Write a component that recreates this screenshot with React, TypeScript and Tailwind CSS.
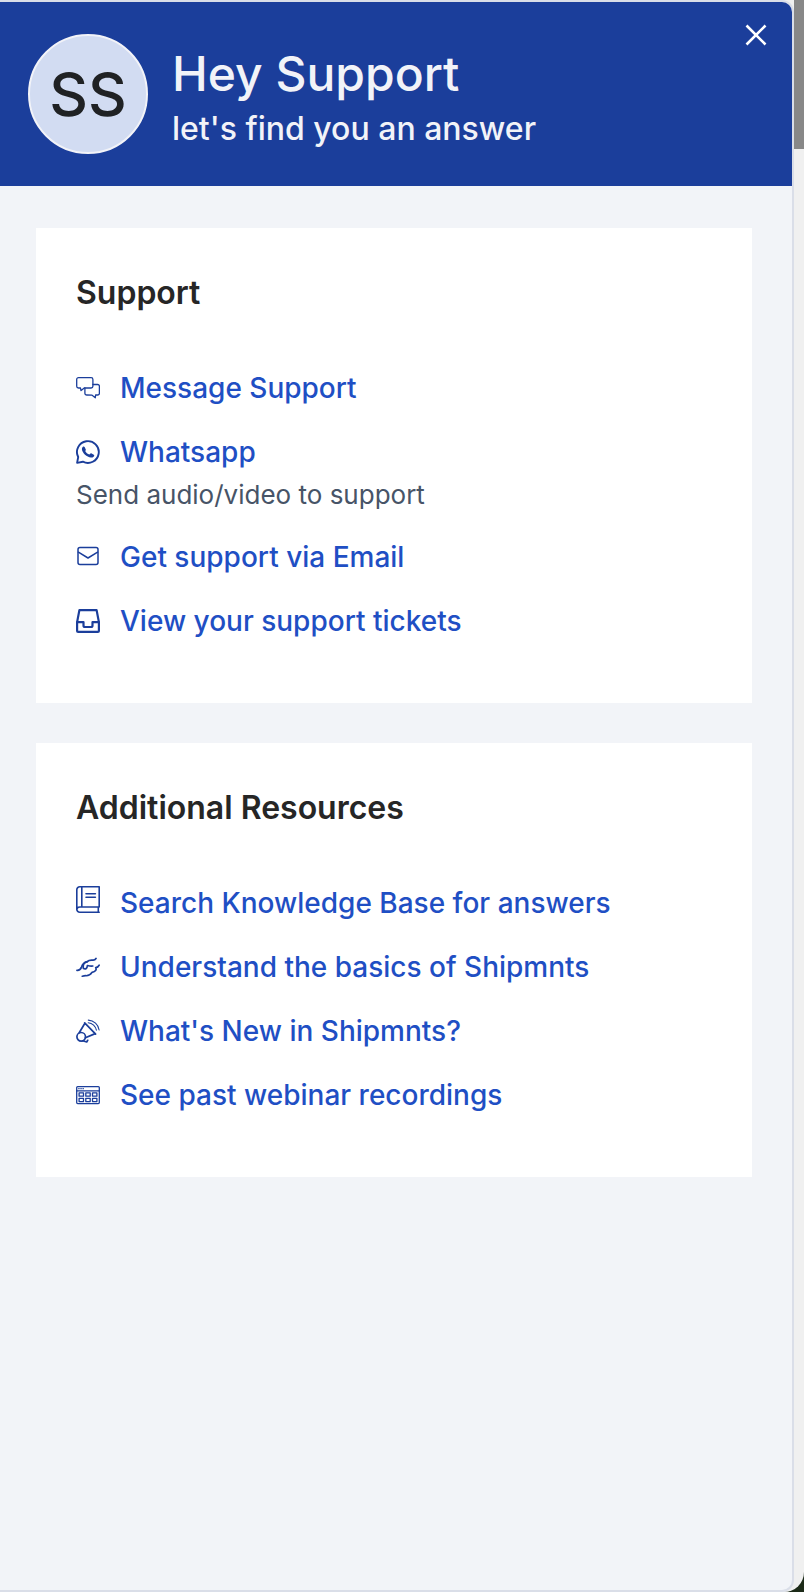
import type { ReactNode } from 'react';

type ResourceLink = {
  label: string;
  icon: ReactNode;
  description?: string;
};

const iconProps = {
  width: 24,
  fill: 'none',
  stroke: 'currentColor',
  strokeLinecap: 'round' as const,
  strokeLinejoin: 'round' as const,
  'aria-hidden': true,
  className: 'shrink-0 text-[#1b3e9b]',
};

function ChatIcon() {
  return (
    <svg {...iconProps} height={24} viewBox="0 0 24 24" strokeWidth="1.3">
      <path d="M2.5 1.6h12.6a1.800 1.800 0 0 1 1.800 1.800v6.800a1.800 1.800 0 0 1-1.800 1.800H8.200l-1.800 1.400-1.400 1.200-.5-2.600h-2A1.800 1.800 0 0 1 .7 10.200V3.400a1.800 1.800 0 0 1 1.800-1.800z" />
      <path d="M16.900 8.500h4.700a1.800 1.800 0 0 1 1.800 1.800v6.900a1.800 1.800 0 0 1-1.800 1.800h-2l-.3 2.800-3.200-2.600-5.400-.2a1.800 1.800 0 0 1-1.800-1.800V12" />
    </svg>
  );
}

function WhatsappIcon() {
  return (
    <svg {...iconProps} height={24} viewBox="0 0 24 24" strokeWidth="1.9">
      <path d="M1.1 22.9l1.100-5.900a10.900 10.900 0 1 1 4.700 4.700z" />
      <path
        d="M6.700 6.900c.5-.6 1.500-.6 1.900.1l1.200 2.400c.2.500 0 1-.6 1.700 1 1.800 2.300 2.900 4.200 3.500l1.100-1c.4-.3.700-.3 1.100-.1l2.200 1.200c.4.200.6.600.4 1.100-.4 1.300-1.600 1.900-3.200 1.700C10.800 17.200 6.300 13 5.900 9.300c-.1-1 .2-1.700.8-2.400z"
        fill="currentColor"
        stroke="none"
      />
    </svg>
  );
}

function MailIcon() {
  return (
    <svg {...iconProps} height={24} viewBox="0 0 24 24" strokeWidth="1.5">
      <rect x="2" y="2.500" width="20" height="17" rx="2" />
      <path d="M2.400 7.200L12 13l9.600-5.800" />
    </svg>
  );
}

function InboxIcon() {
  return (
    <svg {...iconProps} height={24} viewBox="0 0 24 24" strokeWidth="2.200">
      <path d="M3.400 1.100h17.200l2.300 12v8.800a1 1 0 0 1-1 1H2.100a1 1 0 0 1-1-1v-8.800z" />
      <path d="M1.200 13.200h6.300v3.300a1.500 1.500 0 0 0 1.500 1.500h6a1.500 1.500 0 0 0 1.500-1.500v-3.300h6.300" />
    </svg>
  );
}

// drawn taller than its artwork so the book sits above the text's centre line
function BookIcon() {
  return (
    <svg {...iconProps} height={34} viewBox="0 0 24 34" strokeWidth="1.6">
      <path d="M23.200.8H3.800A3 3 0 0 0 .8 3.800v19.400a3 3 0 0 0 3 3h19.400M23.200.8v20.200H3.800a3 3 0 0 0-3 2.700M22.300 21.300v4.700M5.800 1.200v19.700M10 7.800h9.400M10 11.200h9.400" />
    </svg>
  );
}

function HandshakeIcon() {
  return (
    <svg {...iconProps} height={24} viewBox="0 0 24 24" strokeWidth="1.700">
      <path d="M20 3.500c-.8 1.300-1.900 1.700-3.300 1.600-2.300-.2-3.900-.2-5.400 1.500C8 7.500 6.300 9.400 5.400 12.400 4.500 14.900 3 15.500.9 15.300" />
      <path d="M11.300 6.600c-3.200.5-4.800 2.900-3.900 6.900 2.300 1 3.800-.1 4-3 2.100.5 3.800.8 5.400.5" />
      <path d="M23.200 10.200c-.7 1.600-1.900 2.300-3.500 2.300 1.200 2.300-.2 4.200-3.700 4.900-1.800 2.800-4.200 3.500-6.500 3.300-1.200 0-2 .2-3.200.5" />
    </svg>
  );
}

function MegaphoneIcon() {
  return (
    <svg {...iconProps} height={24} viewBox="0 0 24 24" strokeWidth="1.700">
      <circle cx="5.200" cy="17.800" r="4.300" />
      <path d="M3.200 13.800L8.900 4.200 19.200 14.600 9.400 18.800M8.700 3.900l10.900 11.200M6.700 21.800l4 1.200 1-1.700" />
      <path d="M12.300 1.100c5.500.2 10.200 4.700 10.800 9.900M12.200 3.700c4.200.3 7.500 3.600 8.200 7.500" strokeWidth="1.100" />
    </svg>
  );
}

function CalendarIcon() {
  return (
    <svg {...iconProps} height={24} viewBox="0 0 24 24" strokeWidth="1.300">
      <rect x=".7" y="3.600" width="22.600" height="17" rx="1" />
      <path d="M1 7.800h22M2.800 5.700h.3M4.900 5.700h.3M7 5.700h.3" />
      <path d="M3.100 9.900h4.400v3.300H3.100zM9.800 9.900h4.400v3.300H9.800zM16.500 9.900h4.400v3.300h-4.400zM3.100 15.300h4.400v3.300H3.100zM9.800 15.300h4.400v3.300H9.800zM16.500 15.300h4.400v3.300h-4.400z" />
    </svg>
  );
}

const supportLinks: ResourceLink[] = [
  { label: 'Message Support', icon: <ChatIcon /> },
  { label: 'Whatsapp', icon: <WhatsappIcon />, description: 'Send audio/video to support' },
  { label: 'Get support via Email', icon: <MailIcon /> },
  { label: 'View your support tickets', icon: <InboxIcon /> },
];

const resourceLinks: ResourceLink[] = [
  { label: 'Search Knowledge Base for answers', icon: <BookIcon /> },
  { label: 'Understand the basics of Shipmnts', icon: <HandshakeIcon /> },
  { label: "What's New in Shipmnts?", icon: <MegaphoneIcon /> },
  { label: 'See past webinar recordings', icon: <CalendarIcon /> },
];

function LinkCard({ title, links }: { title: string; links: ResourceLink[] }) {
  return (
    <section className="bg-white px-10 pt-10 pb-[60px]">
      <h2 className="text-[32px] leading-[50px] font-semibold text-[#262626]">{title}</h2>
      <ul className="mt-12 flex flex-col gap-5">
        {links.map((link) => (
          <li key={link.label}>
            <a
              href="#"
              className="flex w-fit items-center gap-5 text-[28px] leading-[44px] font-medium text-[#1f4fc4] hover:underline"
            >
              {link.icon}
              <span>{link.label}</span>
            </a>
            {link.description && (
              <p className="text-[26px] leading-[41px] text-[#475467]">{link.description}</p>
            )}
          </li>
        ))}
      </ul>
    </section>
  );
}

export default function App() {
  return (
    <div className="bg-[#1c2a18] font-['Inter',sans-serif]">
      <div className="flex min-h-screen overflow-hidden rounded-br-[20px] bg-[#f0f0f0]">
        {/* Panel */}
        <div className="flex flex-1 flex-col overflow-hidden rounded-r-xl border-y-2 border-r-2 border-[#dadee8] bg-[#f2f4f8]">
          <header className="flex h-[184px] items-start justify-between bg-[#1b3e9b] text-[#f2f3f8]">
            <div className="flex items-center gap-6 pt-8 pl-7">
              <div className="flex size-[120px] shrink-0 items-center justify-center rounded-full border-2 border-[#f2f3f8] bg-[#d2dcf2] text-[60px] font-medium text-[#202224]">
                SS
              </div>
              <div className="pt-2.5">
                <h1 className="text-[48px] leading-[60px] font-medium">Hey Support</h1>
                <p className="text-[32px] leading-[50px] font-medium">let's find you an answer</p>
              </div>
            </div>
            <button type="button" aria-label="Close" className="mt-[21px] mr-6 cursor-pointer">
              <svg width="24" height="24" viewBox="0 0 24 24" stroke="white" strokeWidth="2.600" aria-hidden="true">
                <path d="M2.500 2.500l19 19M21.500 2.500l-19 19" />
              </svg>
            </button>
          </header>

          <main className="flex flex-col gap-10 pt-[42px] pr-10 pb-10 pl-9">
            <LinkCard title="Support" links={supportLinks} />
            <LinkCard title="Additional Resources" links={resourceLinks} />
          </main>
        </div>

        {/* Scroll track */}
        <div className="w-[10px] shrink-0">
          <div className="h-[149px] bg-[#888888]" />
        </div>
      </div>
    </div>
  );
}
